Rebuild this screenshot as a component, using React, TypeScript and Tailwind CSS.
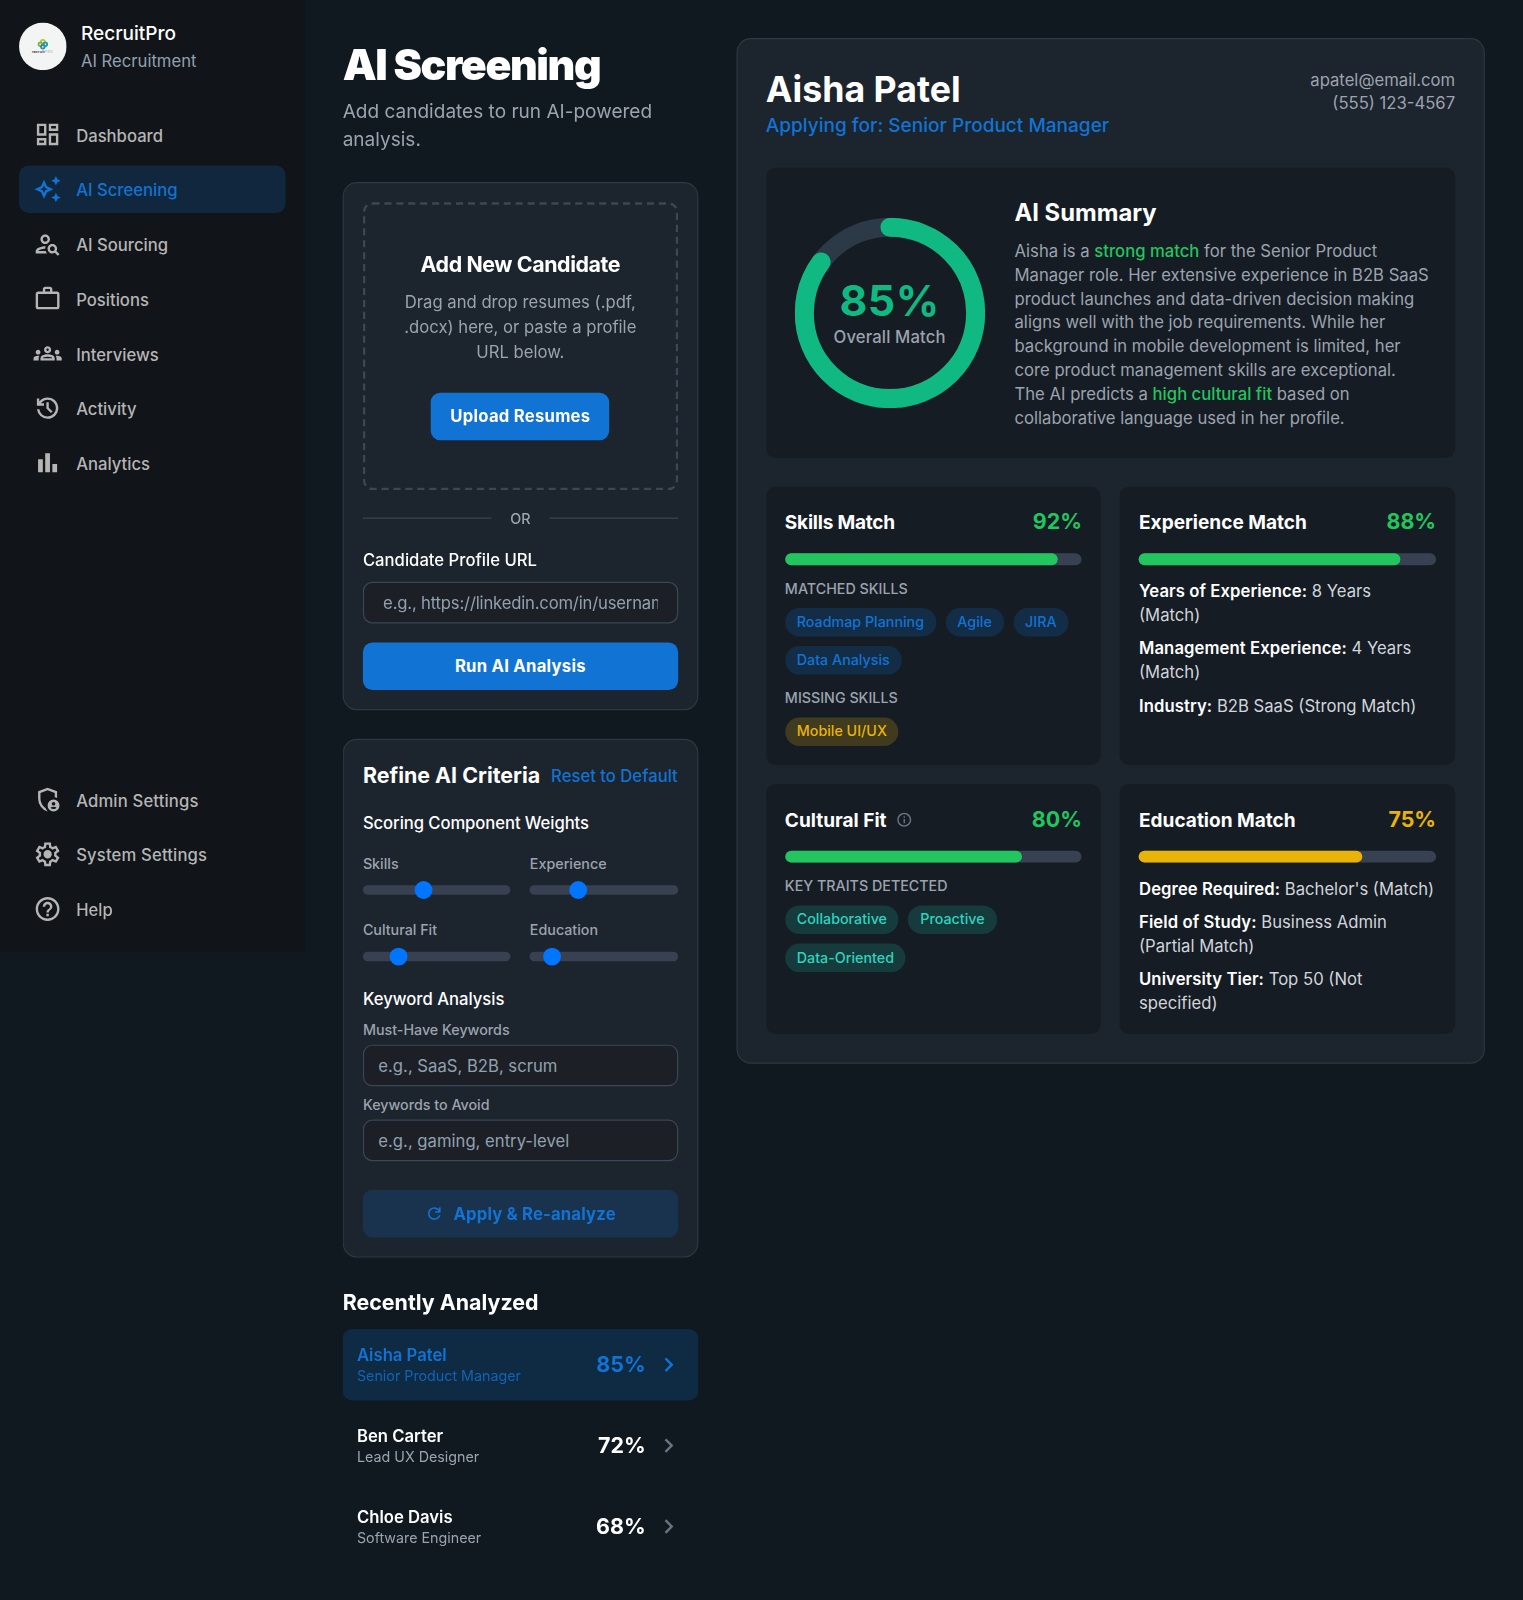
import type { ReactNode } from "react";
import {
  MdBarChart,
  MdChevronRight,
  MdHelpOutline,
  MdInfoOutline,
  MdOutlineAutoAwesome,
  MdOutlineDashboard,
  MdOutlineGroups,
  MdOutlinePersonSearch,
  MdWorkOutline,
} from "react-icons/md";

function Glyph({ d, className }: { d: string; className: string }) {
  return (
    <svg viewBox="0 -960 960 960" fill="currentColor" className={className}>
      <path d={d} />
    </svg>
  );
}

const HISTORY =
  "M480-120q-138 0-240.5-91.5T122-440h82q14 104 92.5 172T480-200q117 0 198.5-81.5T760-480q0-117-81.5-198.5T480-760q-69 0-129 32t-101 88h110v80H120v-240h80v94q51-64 124.5-99T480-840q75 0 140.5 28.5t114 77q48.5 48.5 77 114T840-480q0 75-28.5 140.5t-77 114q-48.5 48.5-114 77T480-120Zm112-192L440-464v-216h80v184l128 128-56 56Z";
const ADMIN =
  "M680-280q25 0 42.5-17.5T740-340q0-25-17.5-42.5T680-400q-25 0-42.5 17.5T620-340q0 25 17.5 42.5T680-280Zm0 120q31 0 57-14.5t42-38.5q-22-13-47-20t-52-7q-27 0-52 7t-47 20q16 24 42 38.5t57 14.5ZM480-80q-139-35-229.5-159.5T160-516v-244l320-120 320 120v227q-19-8-39-14.5t-41-9.5v-147l-240-90-240 90v188q0 47 12.5 94t35 89.5Q310-290 342-254t71 60q11 32 29 61t41 52q-1 0-1.5.5t-1.5.5Zm200 0q-83 0-141.5-58.5T480-280q0-83 58.5-141.5T680-480q83 0 141.5 58.5T880-280q0 83-58.5 141.5T680-80Z";
const SETTINGS =
  "m370-80-16-128q-13-5-24.5-12T307-235l-119 50L78-375l103-78q-1-7-1-13.5v-27q0-6.5 1-13.5L78-585l110-190 119 50q11-8 23-15t24-12l16-128h220l16 128q13 5 24.5 12t22.5 15l119-50 110 190-103 78q1 7 1 13.5v27q0 6.5-2 13.5l103 78-110 190-118-50q-11 8-23 15t-24 12L590-80H370Zm70-80h79l14-106q31-8 57.5-23.5T639-327l99 41 39-68-86-65q5-14 7-29.5t2-31.5q0-16-2-31.5t-7-29.5l86-65-39-68-99 42q-22-23-48.5-38.5T533-694l-13-106h-79l-14 106q-31 8-57.5 23.5T321-633l-99-41-39 68 86 64q-5 15-7 30t-2 32q0 16 2 31t7 30l-86 65 39 68 99-42q22 23 48.5 38.5T427-266l13 106Zm42-180q58 0 99-41t41-99q0-58-41-99t-99-41q-59 0-99.5 41T342-480q0 58 40.5 99t99.5 41Zm-2-140Z";
const REFRESH =
  "M480-160q-134 0-227-93t-93-227q0-134 93-227t227-93q69 0 132 28.5T720-690v-110h80v280H520v-80h168q-32-56-87.5-88T480-720q-100 0-170 70t-70 170q0 100 70 170t170 70q77 0 139-44t87-116h84q-28 106-114 173t-196 67Z";

type NavEntry = { label: string; icon: ReactNode; active?: boolean; wide?: boolean };

const mainNav: NavEntry[] = [
  { label: "Dashboard", icon: <MdOutlineDashboard className="size-6" /> },
  { label: "AI Screening", icon: <MdOutlineAutoAwesome className="size-6" />, active: true },
  { label: "AI Sourcing", icon: <MdOutlinePersonSearch className="size-6" /> },
  { label: "Positions", icon: <MdWorkOutline className="size-6" /> },
  { label: "Interviews", icon: <MdOutlineGroups className="size-6" /> },
  { label: "Activity", icon: <Glyph d={HISTORY} className="size-6" /> },
  { label: "Analytics", icon: <MdBarChart className="size-6" /> },
];

const footerNav: NavEntry[] = [
  { label: "Admin Settings", icon: <Glyph d={ADMIN} className="size-6" />, wide: true },
  { label: "System Settings", icon: <Glyph d={SETTINGS} className="size-6" />, wide: true },
  { label: "Help", icon: <MdHelpOutline className="size-6" /> },
];

function NavList({ items }: { items: NavEntry[] }) {
  return (
    <nav className="flex flex-col gap-1.5">
      {items.map((item) => (
        <a
          key={item.label}
          className={
            "flex h-10 items-center gap-3 rounded-lg px-3 " +
            (item.active ? "bg-[#1173d4]/20 text-[#1173d4]" : "text-[#b5b5b5]")
          }
        >
          {item.icon}
          <span className={"text-sm font-medium leading-[21px] " + (item.wide ? "tracking-[0.009em]" : "")}>
            {item.label}
          </span>
        </a>
      ))}
    </nav>
  );
}

function Logo() {
  return (
    <svg viewBox="0 0 40 40" className="size-10 shrink-0">
      <circle cx="20" cy="20" r="20" fill="#f3f4f4" />
      <g fill="none" strokeWidth="1.5">
        <circle cx="20" cy="16.2" r="1.6" stroke="#b9c92b" />
        <circle cx="17.9" cy="18.2" r="1.5" stroke="#7db33c" />
        <circle cx="22.1" cy="18.2" r="1.5" stroke="#1f9aa8" />
        <circle cx="20" cy="20.3" r="1.5" stroke="#2390b5" />
      </g>
      <text x="10.8" y="25.6" fontSize="3" fontFamily="Inter, sans-serif" fontWeight="700" fill="#3c4146" textLength="10.6">
        recruit
      </text>
      <text x="21.6" y="25.6" fontSize="3" fontFamily="Inter, sans-serif" fill="#a5abb0" textLength="6.8">
        PRO
      </text>
    </svg>
  );
}

function Sidebar() {
  return (
    <aside className="flex h-[800px] w-64 shrink-0 flex-col justify-between bg-[#111418] p-4">
      <div className="flex flex-col gap-8">
        <div className="flex items-center gap-3">
          <Logo />
          <div className="flex flex-col">
            <h1 className="text-base font-medium leading-6 text-white">RecruitPro</h1>
            <p className="text-sm leading-[21px] text-[#92a0b0]">AI Recruitment</p>
          </div>
        </div>
        <NavList items={mainNav} />
      </div>
      <NavList items={footerNav} />
    </aside>
  );
}

const PANEL = "rounded-xl border border-[#2d3842] bg-[#1c242d]";
const INPUT =
  "block h-[35px] w-full rounded-lg border border-[#3b4754] bg-[#1c2026] text-sm text-white outline-none placeholder:text-[#92a0b0]";

function AddCandidate() {
  return (
    <section className={PANEL + " flex flex-col gap-4 p-4"}>
      <div className="flex flex-col items-center gap-6 rounded-lg border-2 border-dashed border-[#3b4754] px-6 py-10">
        <div className="flex flex-col items-center gap-2 text-center">
          <p className="text-lg font-bold leading-[22.5px] tracking-[-0.02em] text-white">Add New Candidate</p>
          <p className="text-sm leading-[21px] text-[#9ca3af]">
            Drag and drop resumes (.pdf, .docx) here, or paste a profile URL below.
          </p>
        </div>
        <button className="h-10 rounded-lg bg-[#1173d4] px-4 text-sm font-bold tracking-[0.015em] text-white">
          Upload Resumes
        </button>
      </div>
      <div className="flex items-center gap-4">
        <div className="h-px grow bg-[#3b4754]" />
        <span className="text-xs font-medium text-[#9ca3af]">OR</span>
        <div className="h-px grow bg-[#3b4754]" />
      </div>
      <label className="flex flex-col gap-2">
        <span className="text-sm font-medium leading-[21px] text-white">Candidate Profile URL</span>
        <input
          className={INPUT + " px-4 tracking-[-0.011em]"}
          placeholder="e.g., https://linkedin.com/in/username"
        />
      </label>
      <button className="h-10 w-full rounded-lg bg-[#1173d4] text-sm font-bold tracking-[0.015em] text-white">
        Run AI Analysis
      </button>
    </section>
  );
}

const weights = [
  { label: "Skills", value: 40 },
  { label: "Experience", value: 30 },
  { label: "Cultural Fit", value: 20 },
  { label: "Education", value: 10 },
];

function Criteria() {
  return (
    <section className={PANEL + " flex flex-col p-4"}>
      <div className="flex items-center justify-between">
        <h3 className="whitespace-nowrap text-lg font-bold leading-7 text-white">Refine AI Criteria</h3>
        <button className="whitespace-nowrap text-sm font-medium text-[#1173d4]">Reset to Default</button>
      </div>
      <p className="mt-4 text-sm font-medium tracking-[-0.005em] text-white">Scoring Component Weights</p>
      <div className="mt-4 grid grid-cols-2 gap-4">
        {weights.map((w) => (
          <div key={w.label} className="flex flex-col">
            <label className="text-xs font-medium text-[#9ca3af]">{w.label}</label>
            <input
              type="range"
              defaultValue={w.value}
              className="mb-1.5 mt-2.5 block h-2 w-full appearance-none rounded-lg bg-[#374151]"
            />
          </div>
        ))}
      </div>
      <p className="mt-4 text-sm font-medium text-white">Keyword Analysis</p>
      <label className="mt-2 flex flex-col gap-1">
        <span className="text-xs font-medium text-[#9ca3af]">Must-Have Keywords</span>
        <input className={INPUT + " px-3"} placeholder="e.g., SaaS, B2B, scrum" />
      </label>
      <label className="mt-2 flex flex-col gap-1">
        <span className="text-xs font-medium text-[#9ca3af]">Keywords to Avoid</span>
        <input className={INPUT + " px-3"} placeholder="e.g., gaming, entry-level" />
      </label>
      <button className="mt-6 flex h-10 items-center justify-center gap-2 rounded-lg bg-[#1173d4]/20 text-sm font-bold tracking-[0.01em] text-[#1173d4]">
        <Glyph d={REFRESH} className="size-4" />
        <span>Apply &amp; Re-analyze</span>
      </button>
    </section>
  );
}

const recent = [
  { name: "Aisha Patel", role: "Senior Product Manager", score: "85%", active: true },
  { name: "Ben Carter", role: "Lead UX Designer", score: "72%", active: false },
  { name: "Chloe Davis", role: "Software Engineer", score: "68%", active: false },
];

function Recent() {
  return (
    <section className="flex flex-col gap-2">
      <h3 className="text-lg font-bold leading-7 text-white">Recently Analyzed</h3>
      {recent.map((r) => (
        <div
          key={r.name}
          className={"flex items-center justify-between rounded-lg p-3 " + (r.active ? "bg-[#1173d4]/20" : "")}
        >
          <div className="flex flex-col">
            <p className={"text-sm font-semibold " + (r.active ? "text-[#1173d4]" : "text-white")}>{r.name}</p>
            <p className={"text-xs " + (r.active ? "text-[#1173d4]/80" : "text-[#9ca3af]")}>{r.role}</p>
          </div>
          <div className="flex items-center gap-[7px] pr-px">
            <span className={"text-lg font-bold leading-7 " + (r.active ? "text-[#1173d4]" : "text-white")}>
              {r.score}
            </span>
            <MdChevronRight className={"size-6 " + (r.active ? "text-[#1173d4]" : "text-[#6b7280]")} />
          </div>
        </div>
      ))}
    </section>
  );
}

function ScoreRing() {
  const length = 2 * Math.PI * 72;
  return (
    <div className="relative flex size-40 shrink-0 flex-col items-center justify-center">
      <svg viewBox="0 0 160 160" className="absolute inset-0 size-40 -rotate-90" fill="none" strokeWidth="16">
        <circle cx="80" cy="80" r="72" stroke="#2c3a47" />
        <circle
          cx="80"
          cy="80"
          r="72"
          stroke="#10b981"
          strokeLinecap="round"
          strokeDasharray={length}
          strokeDashoffset={length * 0.15}
        />
      </svg>
      <span className="relative text-4xl font-bold leading-10 tracking-[0.01em] text-[#10b981]">85%</span>
      <span className="relative text-sm font-medium tracking-[0.008em] text-[#9ca3af]">Overall Match</span>
    </div>
  );
}

function MatchCard({
  title,
  score,
  info,
  bar,
  tone,
  titleTracking = "",
  children,
}: {
  title: string;
  score: number;
  info?: boolean;
  bar: string;
  tone: string;
  titleTracking?: string;
  children: ReactNode;
}) {
  return (
    <div className="flex flex-col gap-3 rounded-lg bg-[#161c24] p-4">
      <div className="flex items-center justify-between">
        <div className="flex items-center gap-2">
          <h4 className={"text-base font-bold text-white " + titleTracking}>{title}</h4>
          {info && <MdInfoOutline className="size-3.5 text-[#6b7280]" />}
        </div>
        <span className={"text-lg font-bold leading-7 " + tone}>{score}%</span>
      </div>
      <div className="h-2.5 w-full rounded-full bg-[#374151]">
        <div className={"h-2.5 rounded-full " + bar} style={{ width: `${score}%` }} />
      </div>
      {children}
    </div>
  );
}

function Chips({ label, items, tone }: { label: string; items: string[]; tone: string }) {
  return (
    <div className="flex flex-col gap-2">
      <p className="text-xs font-medium uppercase text-[#9ca3af]">{label}</p>
      <div className="flex flex-wrap gap-2">
        {items.map((item) => (
          <span key={item} className={"rounded-full px-2.5 py-1 text-xs font-medium " + tone}>
            {item}
          </span>
        ))}
      </div>
    </div>
  );
}

function Facts({ rows }: { rows: [string, string][] }) {
  return (
    <div className="flex flex-col gap-2 whitespace-pre text-sm text-[#d1d5db]">
      {rows.map(([key, value]) => (
        <p key={key}>
          <span className="font-semibold tracking-[0.005em] text-white">{key}:</span> {value}
        </p>
      ))}
    </div>
  );
}

function CandidateReport() {
  return (
    <section className={PANEL + " col-span-2 flex flex-col gap-6 self-start p-6"}>
      <div className="flex items-start justify-between">
        <div>
          <h2 className="text-3xl font-bold leading-9 text-white">Aisha Patel</h2>
          <p className="text-base font-medium text-[#1173d4]">Applying for: Senior Product Manager</p>
        </div>
        <div className="text-right text-sm text-[#9ca3af]">
          <p>apatel@email.com</p>
          <p>(555) 123-4567</p>
        </div>
      </div>
      <div className="flex items-center gap-[25px] rounded-lg bg-[#161c24] p-6">
        <ScoreRing />
        <div className="flex min-w-0 flex-col gap-2">
          <h3 className="text-xl font-bold leading-7 text-white">AI Summary</h3>
          <p className="whitespace-nowrap text-sm text-[#9ca3af]">
            Aisha is a <span className="font-medium text-[#22c55e]">strong match</span> for the Senior Product
            <br />
            Manager role. Her extensive experience in B2B SaaS
            <br />
            product launches and data-driven decision making
            <br />
            aligns well with the job requirements. While her
            <br />
            background in mobile development is limited, her
            <br />
            core product management skills are exceptional.
            <br />
            The AI predicts a <span className="font-medium text-[#22c55e]">high cultural fit</span> based on
            <br />
            collaborative language used in her profile.
          </p>
        </div>
      </div>
      <div className="grid grid-cols-2 gap-4">
        <MatchCard
          title="Skills Match"
          score={92}
          bar="bg-[#22c55e]"
          tone="text-[#22c55e]"
          titleTracking="tracking-[-0.012em]"
        >
          <Chips
            label="Matched Skills"
            items={["Roadmap Planning", "Agile", "JIRA", "Data Analysis"]}
            tone="bg-[#1173d4]/20 text-[#1173d4]"
          />
          <Chips label="Missing Skills" items={["Mobile UI/UX"]} tone="bg-[#eab308]/20 text-[#eab308]" />
        </MatchCard>
        <MatchCard title="Experience Match" score={88} bar="bg-[#22c55e]" tone="text-[#22c55e]">
          <Facts
            rows={[
              ["Years of Experience", "8 Years\n(Match)"],
              ["Management Experience", "4 Years\n(Match)"],
              ["Industry", "B2B SaaS (Strong Match)"],
            ]}
          />
        </MatchCard>
        <MatchCard title="Cultural Fit" score={80} info bar="bg-[#22c55e]" tone="text-[#22c55e]">
          <Chips
            label="Key Traits Detected"
            items={["Collaborative", "Proactive", "Data-Oriented"]}
            tone="bg-[#14b8a6]/20 text-[#2dd4bf]"
          />
        </MatchCard>
        <MatchCard title="Education Match" score={75} bar="bg-[#eab308]" tone="text-[#eab308]">
          <Facts
            rows={[
              ["Degree Required", "Bachelor's (Match)"],
              ["Field of Study", "Business Admin\n(Partial Match)"],
              ["University Tier", "Top 50 (Not\nspecified)"],
            ]}
          />
        </MatchCard>
      </div>
    </section>
  );
}

export default function App() {
  return (
    <div className="h-[1600px] overflow-hidden bg-[#101820] font-['Inter',sans-serif]">
      <div className="flex w-[1280px] origin-top-left scale-[1.1898] items-start">
        <Sidebar />
        <main className="grid min-w-0 flex-1 grid-cols-3 gap-8 p-8">
          <div className="flex min-w-0 flex-col gap-6">
            <header className="flex flex-col gap-1">
              <h1 className="text-4xl font-black leading-[45px] tracking-[-0.033em] text-white">AI Screening</h1>
              <p className="text-base text-[#9ca3af]">Add candidates to run AI-powered analysis.</p>
            </header>
            <AddCandidate />
            <Criteria />
            <Recent />
          </div>
          <CandidateReport />
        </main>
      </div>
    </div>
  );
}
